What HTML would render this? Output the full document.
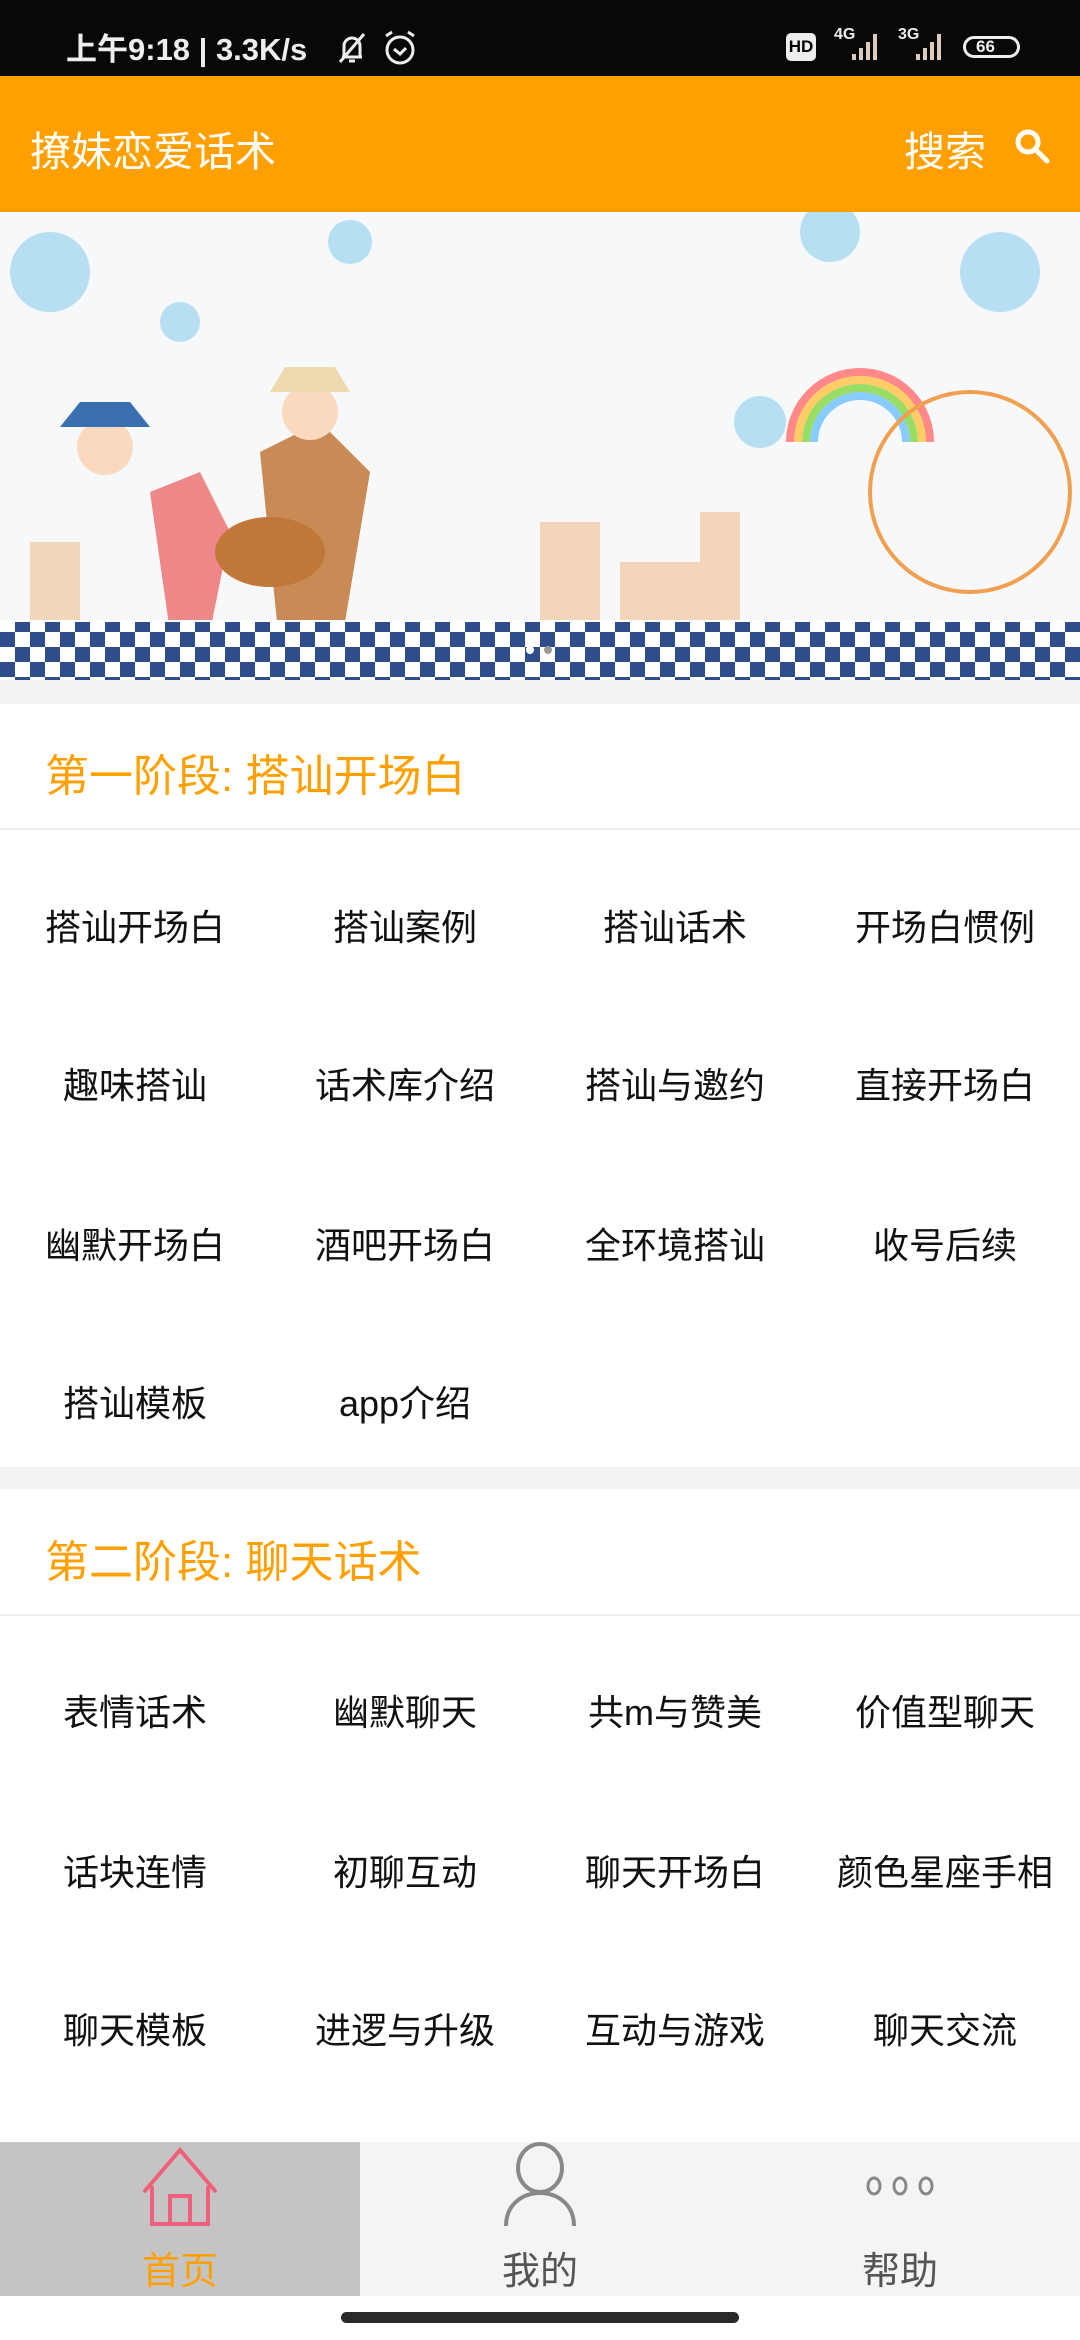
<!DOCTYPE html>
<html><head><meta charset="utf-8"><style>
*{margin:0;padding:0;box-sizing:border-box}
body{width:1080px;height:2340px;background:#fff;font-family:"Liberation Sans","Noto Sans CJK SC",sans-serif;position:relative;overflow:hidden}
.sb{position:absolute;top:0;left:0;width:1080px;height:76px;background:#080808;color:#eee}
.hd{position:absolute;top:76px;left:0;width:1080px;height:136px;background:#FFA000;color:#fff}
.banner{position:absolute;top:212px;left:0;width:1080px;height:468px;background:#f4f8fb;overflow:hidden}
.gap{position:absolute;left:0;width:1080px;background:#f3f3f3}
.sh{position:absolute;left:45px;color:#FFA000;font-size:44px}
.line{position:absolute;left:0;width:1080px;height:2px;background:#ececec}
.row{position:absolute;left:0;width:1080px;display:flex;font-size:36px;color:#111}
.row div{width:270px;text-align:center}
.nav{position:absolute;top:2142px;left:0;width:1080px;height:154px;background:#f4f4f4;display:flex}
.nav div{width:360px;position:relative;text-align:center}
.nav span{position:absolute;left:0;right:0;top:98px;font-size:38px}
</style></head><body>
<div class="sb">
<div style="position:absolute;left:66px;top:24px;font-size:31px;font-weight:bold">上午9:18 | 3.3K/s</div>
<svg style="position:absolute;left:334px;top:30px" width="36" height="36" viewBox="0 0 36 36" fill="none" stroke="#eee" stroke-width="3"><path d="M8 27 L28 27 M10 27 V16 a8 8 0 0 1 16 0 V27 M15 31h6 M6 32 L30 4"/></svg>
<svg style="position:absolute;left:380px;top:28px" width="40" height="40" viewBox="0 0 40 40" fill="none" stroke="#eee" stroke-width="3"><circle cx="20" cy="22" r="13"/><path d="M14 21l6 5 6-6 M6 8l6-4 M34 8l-6-4"/></svg>
<div style="position:absolute;left:786px;top:33px;width:30px;height:28px;background:#eee;border-radius:5px;color:#000;font-size:17px;font-weight:bold;text-align:center;line-height:28px">HD</div>
<div style="position:absolute;left:834px;top:26px;font-size:16px;font-weight:bold">4G</div>
<div style="position:absolute;left:898px;top:26px;font-size:16px;font-weight:bold">3G</div>
<svg style="position:absolute;left:846px;top:30px" width="100" height="32"><path d="M6 30h4v-6h-4z M13 30h4v-12h-4z M20 30h4v-18h-4z M27 30h4v-26h-4z M70 30h4v-6h-4z M77 30h4v-12h-4z M84 30h4v-18h-4z M91 30h4v-26h-4z" fill="#dcb"/></svg>
<div style="position:absolute;left:963px;top:36px;width:57px;height:22px;border:3px solid #eee;border-radius:11px;font-size:17px;font-weight:bold;line-height:16px;padding-left:10px">66</div>
</div>
<div class="hd">
<div style="position:absolute;left:30px;top:42px;font-size:41px">撩妹恋爱话术</div>
<div style="position:absolute;left:904px;top:42px;font-size:41px">搜索</div>
<svg style="position:absolute;left:1012px;top:50px" width="40" height="40" viewBox="0 0 40 40" fill="none" stroke="#fff" stroke-width="5"><circle cx="16" cy="16" r="10"/><path d="M24 24l11 11" stroke-linecap="round"/></svg>
</div>
<div class="banner">
<svg width="1080" height="468">
<rect width="1080" height="468" fill="#f6f8fa"/>
<g fill="#a8d8f0" opacity=".8"><circle cx="50" cy="60" r="40"/><circle cx="350" cy="30" r="22"/><circle cx="830" cy="20" r="30"/><circle cx="1000" cy="60" r="40"/><circle cx="760" cy="210" r="26"/><circle cx="180" cy="110" r="20"/></g>
<g fill="none" stroke-width="8"><path d="M790 230a70 70 0 0 1 140 0" stroke="#f88"/><path d="M798 230a62 62 0 0 1 124 0" stroke="#fc6"/><path d="M806 230a54 54 0 0 1 108 0" stroke="#9d6"/><path d="M814 230a46 46 0 0 1 92 0" stroke="#8cf"/></g>
<circle cx="970" cy="280" r="100" fill="none" stroke="#f0a050" stroke-width="4"/>
<g fill="#f2c9a0" opacity=".7"><rect x="540" y="310" width="60" height="110"/><rect x="620" y="350" width="80" height="70"/><rect x="700" y="300" width="40" height="120"/><rect x="30" y="330" width="50" height="90"/></g>
<path d="M150 280l50 -20 30 60 -20 100 -40 0z" fill="#e88"/>
<path d="M260 240l60 -30 50 50 -30 180 -60 0z" fill="#c98a55"/>
<ellipse cx="270" cy="340" rx="55" ry="35" fill="#c0773a"/>
<circle cx="105" cy="235" r="28" fill="#fbd9bf"/><path d="M60 215h90l-20-25h-50z" fill="#3a6fb0"/>
<circle cx="310" cy="200" r="28" fill="#fbd9bf"/><path d="M270 180h80l-15-25h-50z" fill="#efd9b0"/>
<rect x="0" y="408" width="1080" height="60" fill="#fff"/>
<g fill="#2f4d8a">
<pattern id="p" width="30" height="30" patternUnits="userSpaceOnUse"><rect width="15" height="15"/><rect x="15" y="15" width="15" height="15"/></pattern>
<rect x="0" y="410" width="1080" height="58" fill="url(#p)"/></g>
<circle cx="530" cy="438" r="4" fill="#fff"/><circle cx="548" cy="438" r="4" fill="#999"/>
</svg>
</div>
<div class="gap" style="top:680px;height:24px"></div>
<div class="sh" style="top:740px">第一阶段: 搭讪开场白</div>
<div class="line" style="top:828px"></div>
<div class="row" style="top:899px"><div>搭讪开场白</div><div>搭讪案例</div><div>搭讪话术</div><div>开场白惯例</div></div>
<div class="row" style="top:1057px"><div>趣味搭讪</div><div>话术库介绍</div><div>搭讪与邀约</div><div>直接开场白</div></div>
<div class="row" style="top:1217px"><div>幽默开场白</div><div>酒吧开场白</div><div>全环境搭讪</div><div>收号后续</div></div>
<div class="row" style="top:1375px"><div>搭讪模板</div><div>app介绍</div><div></div><div></div></div>
<div class="gap" style="top:1467px;height:22px"></div>
<div class="sh" style="top:1526px">第二阶段: 聊天话术</div>
<div class="line" style="top:1614px"></div>
<div class="row" style="top:1684px"><div>表情话术</div><div>幽默聊天</div><div>共m与赞美</div><div>价值型聊天</div></div>
<div class="row" style="top:1844px"><div>话块连情</div><div>初聊互动</div><div>聊天开场白</div><div>颜色星座手相</div></div>
<div class="row" style="top:2002px"><div>聊天模板</div><div>进逻与升级</div><div>互动与游戏</div><div>聊天交流</div></div>
<div class="nav">
<div style="background:#c4c4c4"><svg style="position:absolute;left:140px;top:4px" width="80" height="82" viewBox="0 0 80 82" fill="none" stroke="#f0607a" stroke-width="4"><path d="M4 46 L40 4 L76 46 M12 40 V78 H68 V40 M30 78 V50 H50 V78"/></svg><span style="color:#FFA000">首页</span></div>
<div><svg style="position:absolute;left:140px;top:0" width="80" height="86" viewBox="0 0 80 86" fill="none" stroke="#888" stroke-width="4"><ellipse cx="40" cy="26" rx="22" ry="24"/><path d="M6 84 C6 40 74 40 74 84"/></svg><span style="color:#555">我的</span></div>
<div><svg style="position:absolute;left:140px;top:30px" width="80" height="30" fill="none" stroke="#888" stroke-width="3"><ellipse cx="14" cy="14" rx="6" ry="8"/><ellipse cx="40" cy="14" rx="6" ry="8"/><ellipse cx="66" cy="14" rx="6" ry="8"/></svg><span style="color:#555">帮助</span></div>
</div>
<div style="position:absolute;left:341px;top:2312px;width:398px;height:11px;border-radius:6px;background:#2a2a2a"></div>
</body></html>
